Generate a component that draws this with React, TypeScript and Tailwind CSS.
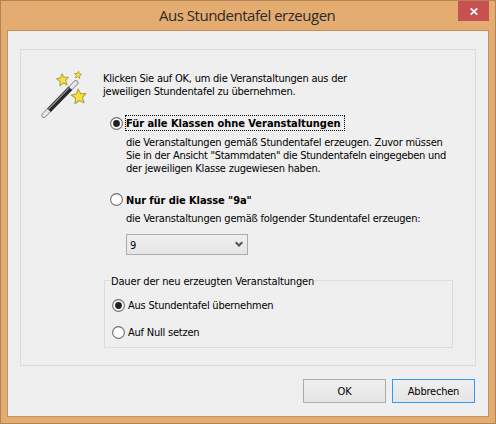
import type { ReactNode } from "react";

function Radio({ checked = false, className = "" }: { checked?: boolean; className?: string }) {
  return (
    <svg width="13" height="13" viewBox="0 0 13 13" className={`shrink-0 ${className}`}>
      <circle cx="6.5" cy="6.5" r="5.9" fill="#fff" stroke="#6e6e6e" strokeWidth="1.1" />
      {checked && <circle cx="6.5" cy="6.5" r="3.4" fill="#212121" />}
    </svg>
  );
}

function Line({ children, className = "tracking-[-0.22px]" }: { children: ReactNode; className?: string }) {
  return <div className={`h-[13px] leading-[13px] whitespace-nowrap ${className}`}>{children}</div>;
}

function Wand() {
  const star = "M0-5.4 1.5-1.9 5.3-1.5 2.5 1.1 3.3 5 0 3-3.3 5-2.5 1.1-5.3-1.5-1.5-1.9Z";
  return (
    <svg width="48" height="48" viewBox="0 0 48 48">
      <path d="M4 45.3 35.8 12.8" stroke="#858b92" strokeWidth="5.2" strokeLinecap="round" />
      <path d="M4 45.3 35.8 12.8" stroke="#e4eaf0" strokeWidth="3.4" strokeLinecap="round" />
      <path d="M9 40.2 30.4 18.3" stroke="#262626" strokeWidth="5" />
      <path d="M8.4 39.2 29.5 17.6" stroke="#8b8b8b" strokeWidth="1.4" />
      <g fill="#f4e244" stroke="#b3a144" strokeLinejoin="round">
        <path d={star} transform="translate(22.7 9.7) rotate(-8) scale(1.12)" strokeWidth="0.9" />
        <path d={star} transform="translate(38 4.9) rotate(8) scale(0.67)" strokeWidth="1.3" />
        <path d={star} transform="translate(38.8 26.4) rotate(-6) scale(1.38)" strokeWidth="0.8" />
      </g>
    </svg>
  );
}

export default function App() {
  return (
    <div className="flex h-[424px] w-[496px] flex-col border border-[#b08457] bg-[#e5ac71] font-['DejaVu_Sans_Condensed','DejaVu_Sans',sans-serif] text-[11px] text-black">
      <div className="flex h-[29px] shrink-0 items-start">
        <div className="w-[158px]" />
        <div className="w-[299px] pt-[3px] font-['Open_Sans',sans-serif] text-[15px] leading-[22px] tracking-[-0.48px] whitespace-nowrap text-[#2b2b2b]">
          Aus Stundentafel erzeugen
        </div>
        <button aria-label="Schließen" className="flex h-5 w-[31px] items-center justify-center bg-[#c75050]">
          <svg width="8" height="7" viewBox="0 0 8 7" className="mt-px">
            <path d="M.7.3 7.3 6.7M7.3.3.7 6.7" stroke="#fff" strokeWidth="1.7" />
          </svg>
        </button>
      </div>

      <div className="mx-[6px] mb-[6px] flex grow flex-col border border-[#c3935f] bg-[#efefef] px-3 pt-[18px]">
        <div className="flex h-[317px] w-[456px] border border-[#dcdcdc]">
          <div className="w-[82px] shrink-0 pt-[20px] pl-[19px]">
            <Wand />
          </div>
          <div className="flex flex-col pt-[22px]">
            <Line>Klicken Sie auf OK, um die Veranstaltungen aus der</Line>
            <Line>jeweiligen Stundentafel zu übernehmen.</Line>

            <div className="mt-[17px] flex h-4 items-start pl-[7px]">
              <Radio checked className="mt-[2px]" />
              <div className="ml-[2px] h-4 w-[220px] border border-dotted border-black pt-px leading-[13px] font-bold tracking-[-0.03px] whitespace-nowrap">
                Für alle Klassen ohne Veranstaltungen
              </div>
            </div>
            <div className="mt-[5px] pl-[23px]">
              <Line className="tracking-[-0.225px]">die Veranstaltungen gemäß Stundentafel erzeugen. Zuvor müssen</Line>
              <Line className="tracking-[-0.28px]">Sie in der Ansicht "Stammdaten" die Stundentafeln eingegeben und</Line>
              <Line>der jeweiligen Klasse zugewiesen haben.</Line>
            </div>

            <div className="mt-[17px] flex h-4 items-start pl-[7px]">
              <Radio className="mt-px" />
              <Line className="mt-[2px] ml-[3px] font-bold tracking-[-0.08px]">Nur für die Klasse "9a"</Line>
            </div>
            <div className="mt-[4px] pl-[23px]">
              <Line>die Veranstaltungen gemäß folgender Stundentafel erzeugen:</Line>
              <button className="mt-[9px] flex h-[21px] w-[122px] items-center justify-between border border-[#acacac] bg-linear-to-b from-[#efefef] to-[#e5e5e5] pr-1 pl-[3px]">
                <span className="pt-[2px] leading-[13px]">9</span>
                <svg width="8" height="7" viewBox="0 0 8 7">
                  <path d="M.7 1.3 4 4.6 7.3 1.3" fill="none" stroke="#555" strokeWidth="2.1" />
                </svg>
              </button>
            </div>

            <fieldset className="mt-[19px] ml-px h-[74px] w-[349px] border border-[#dcdcdc] pl-[7px]">
              <legend className="-ml-px h-[13px] leading-[15px] tracking-[-0.16px] whitespace-nowrap">
                Dauer der neu erzeugten Veranstaltungen
              </legend>
              <div className="mt-[12px] flex h-[13px] items-center gap-[3px]">
                <Radio checked />
                <Line>Aus Stundentafel übernehmen</Line>
              </div>
              <div className="mt-[14px] flex h-[13px] items-center gap-[3px]">
                <Radio />
                <Line>Auf Null setzen</Line>
              </div>
            </fieldset>
          </div>
        </div>

        <div className="mt-[13px] flex justify-end gap-[6px] pr-[1px] leading-[13px] tracking-[-0.22px]">
          <button className="h-6 w-[83px] border border-[#acacac] bg-linear-to-b from-[#efefef] to-[#e5e5e5] pt-px">OK</button>
          <button className="h-6 w-[83px] border border-[#3399ff] bg-linear-to-b from-[#efefef] to-[#e5e5e5] pt-px">Abbrechen</button>
        </div>
      </div>
    </div>
  );
}
